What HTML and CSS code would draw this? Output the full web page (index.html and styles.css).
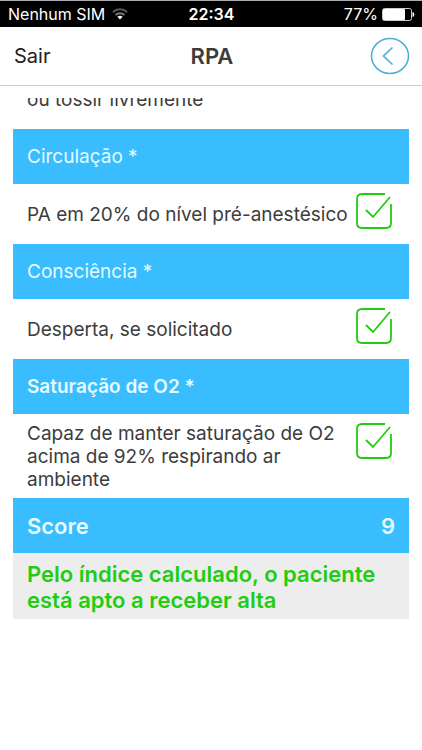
FILE: index.html
```html
<!DOCTYPE html>
<html lang="pt-BR">
<head>
    <meta charset="UTF-8">
    <meta name="viewport" content="width=device-width, initial-scale=1.0">
    <title>RPA</title>
    <link rel="stylesheet" href="styles.css">
</head>
<body>
    <div class="status-bar">
        <div class="carrier">
            <span>Nenhum SIM</span>
            <svg width="16" height="12" viewBox="0 0 16 12" fill="none" stroke-width="2">
                <path d="M1 4.2C5 .3 11 .3 15 4.2" stroke="#555"/>
                <path d="M3.6 7C6 4.6 10 4.6 12.4 7" stroke="#777"/>
                <path d="M5.4 8.8C7 7.4 9 7.4 10.6 8.8L8 11.6Z" fill="#fff"/>
            </svg>
        </div>
        <div class="clock">22:34</div>
        <div class="battery">
            <span>77%</span>
            <svg width="33" height="13" viewBox="0 0 33 13">
                <rect x=".5" y=".5" width="29" height="12" rx="2" fill="none" stroke="#ccc"/>
                <rect x="1" y="1" width="22" height="11" rx="1" fill="#fff"/>
                <path d="M31 4.5q2 2 0 4z" fill="#fff" stroke="#fff"/>
            </svg>
        </div>
    </div>

    <header class="navbar">
        <a href="#" class="exit">Sair</a>
        <h1>RPA</h1>
        <button type="button" class="back" aria-label="Voltar">
            <svg width="40" height="38" viewBox="0 0 40 38" fill="none" stroke="#4aafdc">
                <ellipse cx="20" cy="19" rx="18.5" ry="17.5" stroke-width="1.5"/>
                <path d="M22.5 10.5L13.5 19L22.5 27.5" stroke-width="1.7"/>
            </svg>
        </button>
    </header>

    <main class="content">
        <p class="previous">ou tossir livremente</p>

        <h2 class="section-title">Circulação *</h2>
        <div class="item">
            <label for="circulacao">PA em 20% do nível pré-anestésico</label>
            <span class="check">
                <input type="checkbox" id="circulacao" checked>
                <svg viewBox="0 0 38 38"><path d="M30 2H7Q2 2 2 7V31Q2 36 7 36H31Q36 36 36 31V12M11 18L18 25L35 5"/></svg>
            </span>
        </div>

        <h2 class="section-title">Consciência *</h2>
        <div class="item">
            <label for="consciencia">Desperta, se solicitado</label>
            <span class="check">
                <input type="checkbox" id="consciencia" checked>
                <svg viewBox="0 0 38 38"><path d="M30 2H7Q2 2 2 7V31Q2 36 7 36H31Q36 36 36 31V12M11 18L18 25L35 5"/></svg>
            </span>
        </div>

        <h2 class="section-title bold">Saturação de O2 *</h2>
        <div class="item">
            <label for="saturacao">Capaz de manter saturação de O2 acima de 92% respirando ar ambiente</label>
            <span class="check">
                <input type="checkbox" id="saturacao" checked>
                <svg viewBox="0 0 38 38"><path d="M30 2H7Q2 2 2 7V31Q2 36 7 36H31Q36 36 36 31V12M11 18L18 25L35 5"/></svg>
            </span>
        </div>

        <h2 class="section-title score"><span>Score</span><span>9</span></h2>
        <p class="result">Pelo índice calculado, o paciente está apto a receber alta</p>
    </main>
</body>
</html>
```

FILE: styles.css
```css
* {
    box-sizing: border-box;
    margin: 0;
    padding: 0;
}

body {
    background: #fff;
    color: #3c3c3c;
    font-family: Inter, "Liberation Sans", sans-serif;
    font-size: 19px;
}

svg {
    display: block;
}

.status-bar {
    display: grid;
    grid-template-columns: 1fr auto 1fr;
    align-items: center;
    height: 27px;
    padding: 0 7px 0 8px;
    border-top: 1px solid #aaa;
    background: #000;
    color: #fff;
    font-size: 16px;
}

.carrier, .battery {
    display: flex;
    align-items: center;
    gap: 7px;
}

.battery {
    justify-content: flex-end;
    gap: 4px;
}

.clock {
    font-weight: 600;
}

.navbar {
    display: grid;
    grid-template-columns: 1fr auto 1fr;
    align-items: center;
    height: 59px;
    padding: 0 12px 0 14px;
    border-bottom: 1px solid #ccc;
}

.exit {
    color: #222;
    font-size: 20px;
    text-decoration: none;
}

h1 {
    font-size: 22px;
    font-weight: 600;
}

.back {
    justify-self: end;
    border: none;
    background: none;
    cursor: pointer;
}

.content {
    margin: 12px 13px 0 13px;
}

/* tail of the item scrolled under the navbar */
.previous {
    display: flex;
    align-items: flex-end;
    height: 31px;
    padding: 0 14px 18px;
    overflow: hidden;
    overflow: clip;
    line-height: 23px;
}

.section-title {
    display: flex;
    align-items: center;
    justify-content: space-between;
    height: 55px;
    padding: 0 14px;
    background: #39bdff;
    color: #e6fbff;
    font-size: 19px;
    font-weight: 400;
}

.section-title.bold {
    font-weight: 600;
}

.section-title.score {
    font-size: 22px;
    font-weight: 600;
}

.item {
    display: flex;
    align-items: flex-start;
    justify-content: space-between;
    gap: 6px;
    min-height: 60px;
    padding: 8px 16px 7px 14px;
}

.item label {
    align-self: center;
    line-height: 23px;
}

.check {
    display: grid;
    flex: none;
    width: 38px;
    height: 38px;
}

.check input, .check svg {
    grid-area: 1 / 1;
    width: 38px;
    height: 38px;
}

.check input {
    appearance: none;
    cursor: pointer;
}

.check svg {
    fill: none;
    stroke: #22cc11;
    stroke-width: 1.8;
    pointer-events: none;
}

.result {
    padding: 8px 14px 6px;
    background: #ededed;
    color: #22cc11;
    font-size: 22px;
    font-weight: 600;
    line-height: 26px;
}
```
